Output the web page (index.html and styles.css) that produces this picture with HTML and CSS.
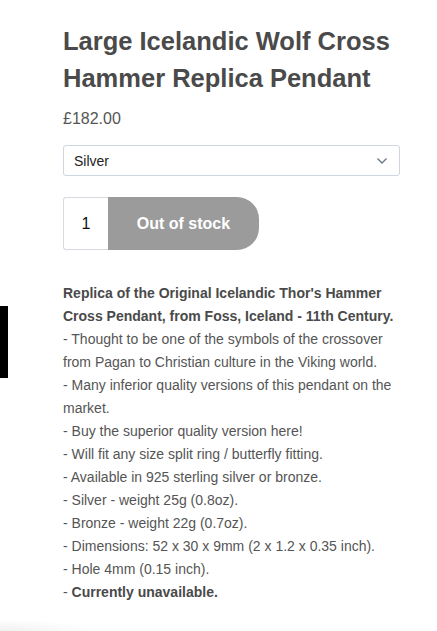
FILE: index.html
```html
<!DOCTYPE html>
<html lang="en">
<head>
<meta charset="utf-8">
<title>Large Icelandic Wolf Cross Hammer Replica Pendant</title>
<link rel="stylesheet" href="styles.css">
</head>
<body>
<div class="side-tab"></div>
<main class="product">
  <h1 class="title">Large Icelandic Wolf Cross Hammer Replica Pendant</h1>
  <div class="price">£182.00</div>
  <div class="select">
    <span class="select-value">Silver</span>
    <svg class="chevron" width="12" height="8" viewBox="0 0 12 8"><path d="M1.5 1.5 L6 6 L10.5 1.5" fill="none" stroke="#6b7685" stroke-width="1.3"/></svg>
  </div>
  <div class="cart-row">
    <div class="qty">1</div>
    <div class="oos">Out of stock</div>
  </div>
  <div class="desc">
    <p><strong>Replica of the Original Icelandic Thor's Hammer Cross Pendant, from Foss, Iceland - 11th Century.</strong><br>
    - Thought to be one of the symbols of the crossover from Pagan to Christian culture in the Viking world.<br>
    - Many inferior quality versions of this pendant on the market.<br>
    - Buy the superior quality version here!<br>
    - Will fit any size split ring / butterfly fitting.<br>
    - Available in 925 sterling silver or bronze.<br>
    - Silver - weight 25g (0.8oz).<br>
    - Bronze - weight 22g (0.7oz).<br>
    - Dimensions: 52 x 30 x 9mm (2 x 1.2 x 0.35 inch).<br>
    - Hole 4mm (0.15 inch).<br>
    - <strong>Currently unavailable.</strong></p>
  </div>
</main>
<div class="corner-shadow"></div>
</body>
</html>
```
FILE: styles.css
```css
html, body {
  margin: 0;
  padding: 0;
  background: #fff;
}
body {
  font-family: "Liberation Sans", Arial, Helvetica, sans-serif;
  color: #555;
  position: relative;
  min-height: 631px;
  overflow: hidden;
}
.side-tab {
  position: absolute;
  left: 0;
  top: 306px;
  width: 8px;
  height: 72px;
  background: #000;
}
.product {
  padding: 23px 37px 0 63px;
}
.title {
  margin: 0;
  font-size: 25.5px;
  line-height: 37px;
  font-weight: 700;
  color: #4a4a4a;
}
.price {
  margin-top: 10px;
  font-size: 16px;
  line-height: 24px;
  color: #555;
}
.select {
  margin-top: 14px;
  height: 31px;
  box-sizing: border-box;
  border: 1px solid #cfd6de;
  border-radius: 3px;
  display: flex;
  align-items: center;
  justify-content: space-between;
  padding: 0 11px 0 10px;
}
.select-value {
  font-size: 14px;
  color: #222;
}
.cart-row {
  margin-top: 21px;
  display: flex;
  height: 53px;
}
.qty {
  width: 45px;
  box-sizing: border-box;
  border: 1px solid #d6dbe1;
  border-right: none;
  border-radius: 3px 0 0 3px;
  display: flex;
  align-items: center;
  justify-content: center;
  font-size: 16px;
  color: #111;
}
.oos {
  width: 151px;
  background: #9b9b9b;
  border-radius: 0 22px 22px 0;
  display: flex;
  align-items: center;
  justify-content: center;
  font-size: 16px;
  font-weight: 700;
  color: #fff;
}
.desc {
  margin-top: 32px;
}
.desc p {
  margin: 0;
  font-size: 14px;
  line-height: 23px;
  color: #555;
}
.desc strong {
  color: #4a4a4a;
}
.corner-shadow {
  position: absolute;
  left: 0;
  bottom: 0;
  width: 140px;
  height: 16px;
  background: radial-gradient(ellipse 100% 100% at 0% 100%, rgba(0,0,0,0.06), rgba(0,0,0,0) 70%);
}
```
